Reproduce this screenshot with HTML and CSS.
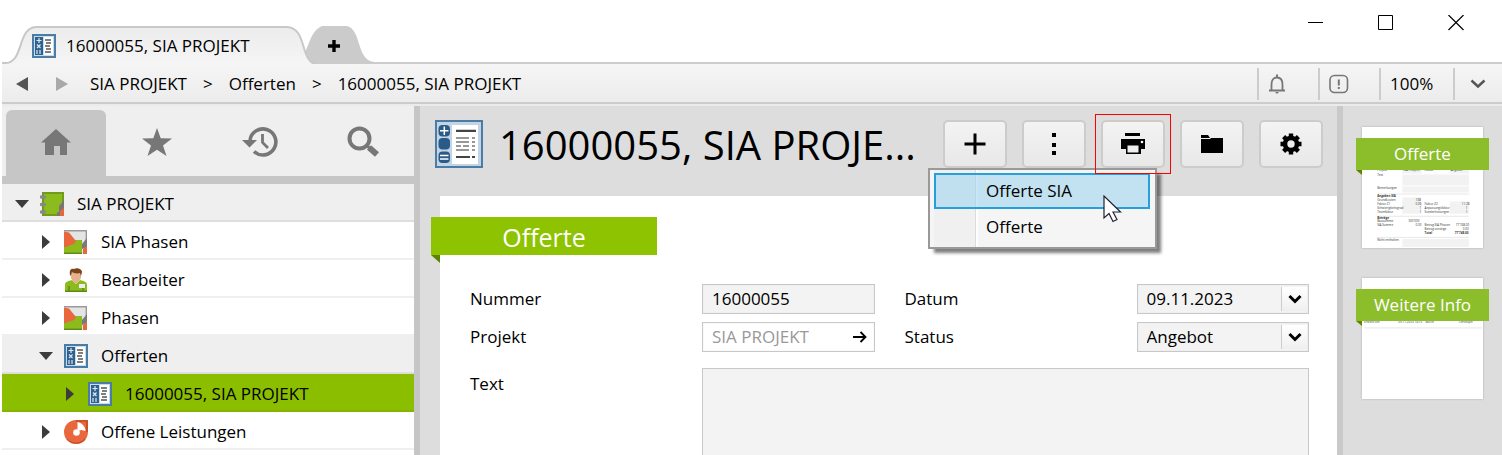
FILE: index.html
```html
<!DOCTYPE html>
<html lang="de">

<head>
    <meta charset="UTF-8">
    <meta name="viewport" content="width=device-width, initial-scale=1.0">
    <title>16000055, SIA PROJEKT</title>
    <link rel="stylesheet" href="styles.css">
</head>

<body>
    <!-- shared icons -->
    <svg class="defs" width="0" height="0" aria-hidden="true">
        <symbol id="offer" viewBox="0 0 24 24">
            <rect x="1" y="1" width="22" height="22" fill="#c9dcea" stroke="#4b7ca6" stroke-width="2" />
            <rect x="3" y="3" width="8" height="18" fill="#2f6190" />
            <rect x="12" y="3" width="9" height="18" fill="#fff" />
            <path d="M7 4v5M4.500 6.500h5M5 10.500l3.500 3.500M8.500 10.500l-3.500 3.500M5 16v4M8 16v4" stroke="#dce8f2" stroke-width="1.200" />
            <path d="M13 6h6M14 9h5M13 12h5M14 15h5M13 18h6" stroke="#555" stroke-width="1.300" />
        </symbol>
        <symbol id="phase" viewBox="0 0 24 24">
            <rect x="0" y="0" width="23" height="24" fill="#e4e4e4" />
            <path d="M0 .7h22.300V10" fill="none" stroke="#999" stroke-width="1.400" />
            <path d="M0 10h18v14H0z" fill="#8cbb1e" />
            <path d="M0 23.300h18" stroke="#5d8a12" stroke-width="1.400" />
            <path d="M0 1.500l5 1 7 8.500-2 3-10 3.500z" fill="#e8673c" />
            <path d="M23 8l-5 6v5l5-2z" fill="#7a7a7a" />
            <path d="M23 16l-4 3v5h4z" fill="#e8673c" />
        </symbol>
        <symbol id="down" viewBox="0 0 16 16">
            <path d="M2.500 5l5.500 5.500L13.500 5" fill="none" stroke="currentColor" stroke-width="3" />
        </symbol>
    </svg>

    <div class="window">
        <header class="titlebar">
            <svg class="tab-shape" width="374" height="64" viewBox="0 0 374 64" aria-hidden="true">
                <defs>
                    <linearGradient id="tabfill" x1="0" y1="0" x2="0" y2="1">
                        <stop offset="0" stop-color="#ececec" />
                        <stop offset="1" stop-color="#f5f5f5" />
                    </linearGradient>
                </defs>
                <path d="M300 64L304 50C309 38 311 30 320 26H345C360 30 354 60 372 62V64Z" fill="#cbcbcb" />
                <path d="M0 64V63H4C22 62 15 28 34 27H285C305 28 298 60 313 64Z" fill="url(#tabfill)" />
                <path d="M0 63H4C22 62 15 28 34 27H285C305 28 298 60 313 64" fill="none" stroke="#c8c8c8" stroke-width="2" />
            </svg>
            <div class="tabs">
                <a class="tab" href="#">
                    <svg width="24" height="24"><use href="#offer" /></svg>
                    16000055, SIA PROJEKT
                </a>
                <button class="new-tab" aria-label="Neuer Tab">
                    <svg width="14" height="14" viewBox="0 0 14 14"><path d="M7 1v12M1 7h12" stroke="#000" stroke-width="3.400" /></svg>
                </button>
            </div>
            <div class="win-buttons">
                <button aria-label="Minimieren"><svg width="16" height="16"><path d="M0 7.500h15" stroke="#000" /></svg></button>
                <button aria-label="Maximieren"><svg width="16" height="16"><path d="M.5 .5h14v14H.5z" fill="none" stroke="#000" /></svg></button>
                <button aria-label="Schliessen"><svg width="16" height="16"><path d="M.5 0l15 15M15.500 0l-15 15" stroke="#000" stroke-width="1.200" /></svg></button>
            </div>
        </header>

        <nav class="toolbar">
            <button class="arrow" aria-label="Zurück"><svg width="12" height="14"><path d="M12 0v14L0 7z" fill="#555" /></svg></button>
            <button class="arrow" aria-label="Vorwärts"><svg width="12" height="14"><path d="M0 0v14l12-7z" fill="#a8a8a8" /></svg></button>
            <div class="crumbs">
                <a href="#">SIA PROJEKT</a>
                <span>&gt;</span>
                <a href="#">Offerten</a>
                <span>&gt;</span>
                <a href="#">16000055, SIA PROJEKT</a>
            </div>
            <div class="status">
                <button class="cell" aria-label="Meldungen">
                    <svg width="18" height="20" viewBox="0 0 18 20"><path d="M1 16.500h16M3.500 16V10.500C3.500 6 5.500 3.500 9 3.500s5.500 2.500 5.500 7V16" fill="none" stroke="#777" stroke-width="1.800" /><path d="M8 .5h2v3H8zM7 18h4l-2 2z" fill="#777" /></svg>
                </button>
                <button class="cell" aria-label="Hinweise">
                    <svg width="20" height="20" viewBox="0 0 20 20"><rect x="1" y="1.500" width="17.500" height="17" rx="4.500" fill="none" stroke="#777" stroke-width="1.600" /><path d="M9.800 5.500v6M9.800 13v2" stroke="#777" stroke-width="2" /></svg>
                </button>
                <button class="cell zoom">100%</button>
                <button class="cell zoom-drop" aria-label="Zoom wählen">
                    <svg width="16" height="16" viewBox="0 0 16 16"><path d="M1.500 4.500L8 10.500l6.500-6" fill="none" stroke="#555" stroke-width="2.400" /></svg>
                </button>
            </div>
        </nav>

        <div class="content">
            <aside class="sidebar">
                <div class="side-tabs">
                    <button class="active" aria-label="Start"><svg width="30" height="28" viewBox="0 0 30 28"><path d="M15 1l15 13.500h-4V27h-7v-9h-6v9H4V14.500H0z" fill="#777" /></svg></button>
                    <button aria-label="Favoriten"><svg width="30" height="28" viewBox="0 0 30 28"><path d="M15 0l3.700 10.200L30 10.500l-9 6.900L24.500 28 15 21.700 5.500 28 9 17.400 0 10.500l11.300-.3z" fill="#777" /></svg></button>
                    <button aria-label="Verlauf"><svg width="36" height="32" viewBox="0 0 36 32"><path d="M8 14A13 13 0 1 1 12 25.500" fill="none" stroke="#777" stroke-width="3.600" /><path d="M0 14h15l-7.500 7.500z" fill="#777" /><path d="M20.500 8v8.500l5.500 5.500" fill="none" stroke="#777" stroke-width="2.800" /></svg></button>
                    <button aria-label="Suche"><svg width="32" height="32" viewBox="0 0 32 32"><circle cx="12.500" cy="12.500" r="10" fill="none" stroke="#777" stroke-width="4" /><path d="M19.500 19.500l3 2.500" stroke="#777" stroke-width="3" /><path d="M22 21.500l8 7" stroke="#777" stroke-width="6" /></svg></button>
                </div>
                <ul class="tree">
                    <li class="shade">
                        <svg class="tri" width="14" height="8"><path d="M0 0h14L7 8z" /></svg>
                        <svg width="24" height="24" viewBox="0 0 24 24">
                            <rect x="2" y="0" width="22" height="24" fill="#6f9a1a" /><rect x="4" y="2" width="18" height="20" fill="#8cbb1e" />
                            <path d="M24 8l-5 6v6h-2v4h7z" fill="#777" /><path d="M24 16l-4 3v5h4z" fill="#e8673c" />
                            <path d="M1.500 5h3M1.500 12.500h3M1.500 20h3" stroke="#888" stroke-width="3.400" stroke-linecap="round" />
                        </svg>
                        SIA PROJEKT
                    </li>
                    <li class="level1">
                        <svg class="tri" width="14" height="14"><path d="M3 0v14l8-7z" /></svg>
                        <svg width="24" height="24"><use href="#phase" /></svg>
                        SIA Phasen
                    </li>
                    <li class="level1">
                        <svg class="tri" width="14" height="14"><path d="M3 0v14l8-7z" /></svg>
                        <svg width="24" height="24" viewBox="0 0 24 24">
                            <path d="M1 24v-7c0-3 3-4 7-5l4 4 4-4c4 1 7 2 7 5v7z" fill="#8cbb1e" /><path d="M1 23.200h22M5 18v5M19 20v3" stroke="#5d8a12" stroke-width="1.400" />
                            <path d="M8 4h9v5c0 3-2 3-2 4l-3 3-3-3c0-1-2-1-2-4z" fill="#e5b28c" />
                            <path d="M6 7c-1-5 1-7 4-6 3-2 8 0 8 3l-1 4-1-3c-3 1-7 0-8-1l-1 4z" fill="#7d431b" />
                            <rect x="15" y="16" width="6" height="4" fill="#eee" />
                        </svg>
                        Bearbeiter
                    </li>
                    <li class="level1">
                        <svg class="tri" width="14" height="14"><path d="M3 0v14l8-7z" /></svg>
                        <svg width="24" height="24"><use href="#phase" /></svg>
                        Phasen
                    </li>
                    <li class="level1 shade">
                        <svg class="tri" width="14" height="8"><path d="M0 0h14L7 8z" /></svg>
                        <svg width="24" height="24"><use href="#offer" /></svg>
                        Offerten
                    </li>
                    <li class="level2 selected">
                        <svg class="tri" width="14" height="14"><path d="M3 0v14l8-7z" /></svg>
                        <svg width="24" height="24"><use href="#offer" /></svg>
                        16000055, SIA PROJEKT
                    </li>
                    <li class="level1">
                        <svg class="tri" width="14" height="14"><path d="M3 0v14l8-7z" /></svg>
                        <svg width="24" height="24" viewBox="0 0 24 24">
                            <path d="M12 0h12v12A12 12 0 1 1 12 0z" fill="#e8673c" /><path d="M12 1h11v11" fill="none" stroke="#c84a22" stroke-width="1.600" />
                            <path d="M13.500 11V2c5 1 8 5 8 9l-4-1z" fill="#fff" /><circle cx="12.500" cy="12.500" r="3.300" fill="#fff" />
                            <path d="M3 19c4 5 13 6 18 0" fill="none" stroke="#c84a22" stroke-width="1.200" />
                        </svg>
                        Offene Leistungen
                    </li>
                </ul>
            </aside>

            <main class="main">
                <div class="head">
                    <svg class="head-icon" width="48" height="48" viewBox="0 0 48 48" aria-hidden="true">
                        <rect x="1" y="1" width="46" height="46" fill="#c3d5e5" stroke="#4b7ca6" stroke-width="2" />
                        <rect x="17" y="5" width="26" height="39" fill="#fff" />
                        <rect x="3.500" y="5" width="11.500" height="11.500" rx="4" fill="#2a5b88" />
                        <rect x="3.500" y="18" width="11.500" height="11.500" rx="4" fill="#2a5b88" />
                        <rect x="3.500" y="31.500" width="11.500" height="11.500" rx="4" fill="#2a5b88" />
                        <path d="M9.300 6.500v8.500M5 10.800h8.500M5 35.500h8.500M5 39h8.500" stroke="#fff" stroke-width="1.500" />
                        <path d="M21 10.800h20M21 37h14M37 37h3" stroke="#444" stroke-width="2.200" />
                        <path d="M21 18h13M37 18h3M21 22h13M37 22h3M21 26h5M28 26h6M37 26h3M21 30h13M37 30h3" stroke="#777" stroke-width="1.600" />
                    </svg>
                    <h1>16000055, SIA PROJE...</h1>
                    <div class="actions">
                        <button aria-label="Neu"><svg width="24" height="24"><path d="M12 1.500v21M1.500 12h21" stroke="#000" stroke-width="3" /></svg></button>
                        <button aria-label="Mehr"><svg width="24" height="24"><path d="M12 1v4M12 11v4M12 19v4" stroke="#000" stroke-width="4" /></svg></button>
                        <div class="print">
                            <button aria-label="Drucken"><svg width="24" height="22" viewBox="0 0 24 22"><path d="M4 0h15v3H4zM0 6h24v10h-4v5H5v-5H0z" /><path d="M6.500 12.500h11v7h-11z" fill="#eee" /><circle cx="21" cy="9" r="1.300" fill="#fff" /></svg></button>
                        </div>
                        <button aria-label="Ordner"><svg width="22" height="18" viewBox="0 0 22 18"><path d="M0 4h9l1-1h12v15H0zM0 0h7l2 3H0z" /></svg></button>
                        <button aria-label="Einstellungen"><svg width="22" height="22" viewBox="0 0 22 22"><circle cx="11" cy="11" r="6" fill="none" stroke="#000" stroke-width="4.600" /><path d="M11 0.500v4M11 17.500v4M.5 11h4M17.500 11h4M3.600 3.600l2.800 2.800M15.600 15.600l2.800 2.800M3.600 18.400l2.800-2.800M15.600 6.400l2.800-2.800" stroke="#000" stroke-width="4.400" /></svg></button>
                        <div class="menu">
                            <button class="hover">Offerte SIA</button>
                            <button>Offerte</button>
                            <svg class="cursor" width="19" height="28" viewBox="0 0 19 28"><path d="M1 1v22l5-4.500 4 8 4-2-4-7.500h7.500z" fill="#fff" stroke="#223" stroke-width="1.200" /></svg>
                        </div>
                    </div>
                </div>

                <form class="sheet">
                    <h2 class="ribbon">Offerte</h2>
                    <div class="fields">
                        <div class="field">
                            <label for="nummer">Nummer</label>
                            <div class="box"><input id="nummer" type="text" value="16000055"></div>
                        </div>
                        <div class="field">
                            <label for="datum">Datum</label>
                            <div class="box">
                                <input id="datum" type="text" value="09.11.2023">
                                <button type="button" class="drop" aria-label="Kalender"><svg width="16" height="16"><use href="#down" /></svg></button>
                            </div>
                        </div>
                        <div class="field">
                            <label for="projekt">Projekt</label>
                            <div class="box link">
                                <input id="projekt" type="text" value="SIA PROJEKT">
                                <button type="button" class="go" aria-label="Öffnen"><svg width="14" height="12" viewBox="0 0 14 12"><path d="M0 6h12.500M7.500 1l5 5-5 5" fill="none" stroke="#000" stroke-width="1.800" /></svg></button>
                            </div>
                        </div>
                        <div class="field">
                            <label for="status">Status</label>
                            <div class="box">
                                <select id="status">
                                    <option>Angebot</option>
                                </select>
                                <span class="drop"><svg width="16" height="16"><use href="#down" /></svg></span>
                            </div>
                        </div>
                    </div>
                    <div class="field text">
                        <label for="text">Text</label>
                        <textarea id="text"></textarea>
                    </div>
                </form>
            </main>

            <aside class="preview">
                <a class="page" href="#">
                    <svg viewBox="0 0 120 120" aria-hidden="true">
                        <g fill="#f2f2f2">
                            <path d="M40 42h19v4H40zM87 42h19v4H87zM40 47h66v11H40zM40 59h66v6H40zM40 70h19v16H40zM87 74h19v12H87zM40 111h66v8H40z" />
                        </g>
                        <path d="M15 66.500h91M15 88.500h91M15 109.500h91" stroke="#ddd" stroke-width=".7" />
                        <g class="tiny">
                            <text x="15" y="44">Projekt</text><text x="41" y="44">SIA PROJEKT</text><text x="62" y="44">Status</text><text x="88" y="44">Angebot</text>
                            <text x="15" y="49">Text</text><text x="15" y="61">Bemerkungen</text>
                            <text class="b" x="15" y="69">Angaben SIA</text>
                            <text x="15" y="73">Grundkosten</text><text x="53" y="73">138</text>
                            <text x="15" y="77">Faktor Z1</text><text x="53" y="77">0.06</text><text x="62" y="77">Faktor Z2</text><text x="99" y="77">11.28</text>
                            <text x="15" y="81">Schwierigkeitsgrad</text><text x="57" y="81">1</text><text x="62" y="81">Anpassungsfaktor</text><text x="103" y="81">1</text>
                            <text x="15" y="85">Teamfaktor</text><text x="57" y="85">1</text><text x="62" y="85">Sonderleistungen</text><text x="103" y="85">1</text>
                            <text class="b" x="15" y="91">Beträge</text>
                            <text x="15" y="94">Bausumme</text><text x="46" y="94">500'000</text>
                            <text x="15" y="98">SIA Summe</text><text x="53" y="98">0.00</text><text x="62" y="98">Betrag SIA Phasen</text><text x="93" y="98">77'748.00</text>
                            <text x="62" y="102">Betrag sonstige</text><text x="100" y="102">0.00</text>
                            <text class="b" x="62" y="106">Total</text><text class="b" x="92" y="106">77'748.00</text>
                            <text x="15" y="113">Nicht enthalten</text>
                        </g>
                    </svg>
                    <span class="ribbon small">Offerte</span>
                </a>
                <a class="page" href="#">
                    <svg viewBox="0 0 120 120" aria-hidden="true">
                        <path d="M2 49.500h117" stroke="#ddd" stroke-width=".7" />
                        <g class="tiny">
                            <text x="2" y="45">Erstellt von</text><text x="36" y="45">09.11.2023 14:15</text><text x="63" y="45">durch</text><text x="96" y="45">Christoph</text>
                        </g>
                    </svg>
                    <span class="ribbon small">Weitere Info</span>
                </a>
            </aside>
        </div>
    </div>
</body>

</html>
```
FILE: styles.css
```css
* {
    box-sizing: border-box;
}

body {
    margin: 0;
    font-family: "Segoe UI", "Open Sans", sans-serif;
    font-size: 17px;
    line-height: 24px;
    color: #000;
    background: #fff;
    overflow: hidden;
}

button {
    margin: 0;
    padding: 0;
    border: none;
    background: none;
    font: inherit;
    color: inherit;
    display: flex;
    align-items: center;
    justify-content: center;
}

a {
    color: inherit;
    text-decoration: none;
}

svg {
    display: block;
    flex: none;
}

.defs {
    position: absolute;
}

.window {
    display: flex;
    flex-direction: column;
    height: 100vh;
    padding-left: 2px;
    overflow: hidden;
}

/* title bar */
.titlebar {
    position: relative;
    flex: none;
    display: flex;
    justify-content: space-between;
    height: 64px;
    border-bottom: 2px solid #ccc;
}

.tab-shape {
    position: absolute;
    left: 0;
    top: 0;
}

.tabs {
    position: relative;
    display: flex;
    align-items: center;
    padding: 30px 0 0 30px;
}

.tab {
    display: flex;
    align-items: center;
    gap: 10px;
    width: 272px;
}

.new-tab {
    width: 60px;
    height: 32px;
}

.win-buttons {
    display: flex;
    gap: 54px;
    height: 46px;
    padding-right: 38px;
}

/* breadcrumb bar */
.toolbar {
    flex: none;
    display: flex;
    align-items: center;
    height: 40px;
    padding: 2px 0 0 14px;
    background: linear-gradient(#f5f5f5, #ececec);
    border-bottom: 2px solid #ccc;
}

.arrow {
    width: 12px;
    margin-right: 28px;
}

.crumbs {
    display: flex;
    gap: 16px;
    margin-left: -6px;
    white-space: nowrap;
}

.status {
    display: flex;
    margin-left: auto;
}

.cell {
    justify-content: flex-start;
    width: 61px;
    height: 32px;
    padding-left: 9px;
    border-left: 2px solid #ccc;
}

.zoom {
    width: 74px;
}

.zoom-drop {
    width: 49px;
    padding-left: 15px;
}

.content {
    flex: 1;
    display: flex;
    min-height: 0;
    border-top: 2px solid #ebebeb;
}

/* navigation tree */
.sidebar {
    flex: none;
    width: 418px;
    background: #fff;
    border-right: 6px solid #c6c6c6;
}

.side-tabs {
    display: flex;
    height: 78px;
    padding: 4px 0 0 4px;
    background: #efefef;
    border-bottom: 8px solid #c6c6c6;
}

.side-tabs button {
    flex: 1;
    padding-bottom: 2px;
    border-radius: 6px 6px 0 0;
}

.side-tabs .active {
    flex: none;
    width: 100px;
    background: #c6c6c6;
}

.tree {
    margin: 0;
    padding: 0;
    list-style: none;
}

.tree li {
    display: flex;
    align-items: center;
    gap: 13px;
    height: 38px;
    padding: 4px 0 0 13px;
    border-bottom: 2px solid #efefef;
}

.tree .tri {
    fill: #3c3c3c;
    margin-right: -2px;
}

.tree .level1 {
    padding-left: 37px;
}

.tree .level2 {
    padding-left: 61px;
}

.tree .shade {
    background: #efefef;
    border-color: #dedede;
}

.tree .selected {
    background: #8cbe00;
    border-color: #84b300;
}

/* record */
.main {
    flex: 1;
    display: flex;
    flex-direction: column;
    min-width: 0;
    background: #ddd;
}

.head {
    flex: none;
    display: flex;
    height: 90px;
    padding: 14px 14px 0 15px;
}

.head h1 {
    flex: 1;
    min-width: 0;
    margin: 0 12px 0 16px;
    font-size: 40px;
    font-weight: normal;
    line-height: 50px;
    white-space: nowrap;
}

.actions {
    position: relative;
    display: flex;
    gap: 15px;
}

.actions > button,
.print > button {
    width: 64px;
    height: 48px;
    border: 2px solid #ccc;
    border-radius: 5px;
    background: linear-gradient(#f3f3f3, #e8e8e8);
}

.print {
    position: relative;
    z-index: 2;
    height: 48px;
    outline: 1px solid #f00;
    outline-offset: 5px;
}

.menu {
    position: absolute;
    left: -15px;
    top: 48px;
    z-index: 1;
    width: 229px;
    padding: 3px 5px 2px 4px;
    border: 2px solid #999;
    background: linear-gradient(90deg, #f5f5f5 4px, #f0f0f0 4px, #f0f0f0 45px, #dcdcdc 45px, #dcdcdc 46px, #fff 46px, #fff 48px, #f5f5f5 48px);
    box-shadow: 5px 5px 3px -1px rgba(0, 0, 0, .5);
}

.menu button {
    justify-content: flex-start;
    width: 100%;
    height: 36px;
    padding-left: 50px;
    border: 2px solid transparent;
}

.menu .hover {
    border-color: #26a0da;
    background: rgba(145, 208, 237, .5);
}

.cursor {
    position: absolute;
    left: 173px;
    top: 25px;
}

.sheet {
    flex: 1;
    margin-left: 20px;
    padding: 21px 28px 0 30px;
    background: #fff;
}

.ribbon {
    position: relative;
    width: 226px;
    height: 38px;
    margin: 0 0 29px -39px;
    padding-top: 1px;
    font-size: 25px;
    font-weight: normal;
    line-height: 38px;
    text-align: center;
    color: #fff;
    background: #8dc300;
}

.ribbon::after {
    content: "";
    position: absolute;
    left: 0;
    top: 100%;
    border-top: 8px solid #5d8400;
    border-left: 9px solid transparent;
}

.fields {
    display: grid;
    grid-template-columns: repeat(2, minmax(0, 1fr));
    gap: 8px 30px;
}

.field {
    display: grid;
    grid-template-columns: 232px minmax(0, 1fr);
    align-items: center;
}

.field.text {
    margin-top: 16px;
    align-items: start;
}

.field.text label {
    padding-top: 4px;
}

.box {
    position: relative;
    display: flex;
    height: 30px;
    border: 1px solid #c8c8c8;
    background: #f3f3f3;
    box-shadow: inset 0 0 1px #c8c8c8;
}

.box input,
.box select {
    flex: 1;
    min-width: 0;
    padding: 0 0 0 9px;
    border: none;
    background: none;
    font: inherit;
    color: #000;
    appearance: none;
    outline: none;
}

.box.link {
    background: #fff;
}

.box.link input {
    color: #999;
}

.go {
    width: 28px;
}

.drop {
    display: flex;
    align-items: center;
    justify-content: center;
    width: 26px;
    margin: 2px 1px;
    border-left: 1px solid #ccc;
    background: linear-gradient(#fff, #efefef);
    pointer-events: none;
}

textarea {
    width: 100%;
    height: 200px;
    border: 1px solid #c8c8c8;
    background: #f3f3f3;
    resize: none;
}

/* page thumbnails */
.preview {
    flex: none;
    width: 165px;
    padding: 21px 19px 0 19px;
    border-left: 6px solid #c9c9c9;
    background: #ddd;
}

.page {
    position: relative;
    display: block;
    margin-bottom: 30px;
    background: #fff;
    box-shadow: 0 0 2px #aaa;
}

.tiny {
    font-size: 3px;
    fill: #333;
}

.tiny .b {
    font-weight: bold;
}

.ribbon.small {
    position: absolute;
    left: -6px;
    right: -6px;
    top: 11px;
    width: auto;
    height: 32px;
    margin: 0;
    padding: 0;
    font-size: 17px;
    line-height: 32px;
    background: #8cbe2c;
}

.ribbon.small::after {
    border-top-width: 5px;
    border-left-width: 6px;
}
```
